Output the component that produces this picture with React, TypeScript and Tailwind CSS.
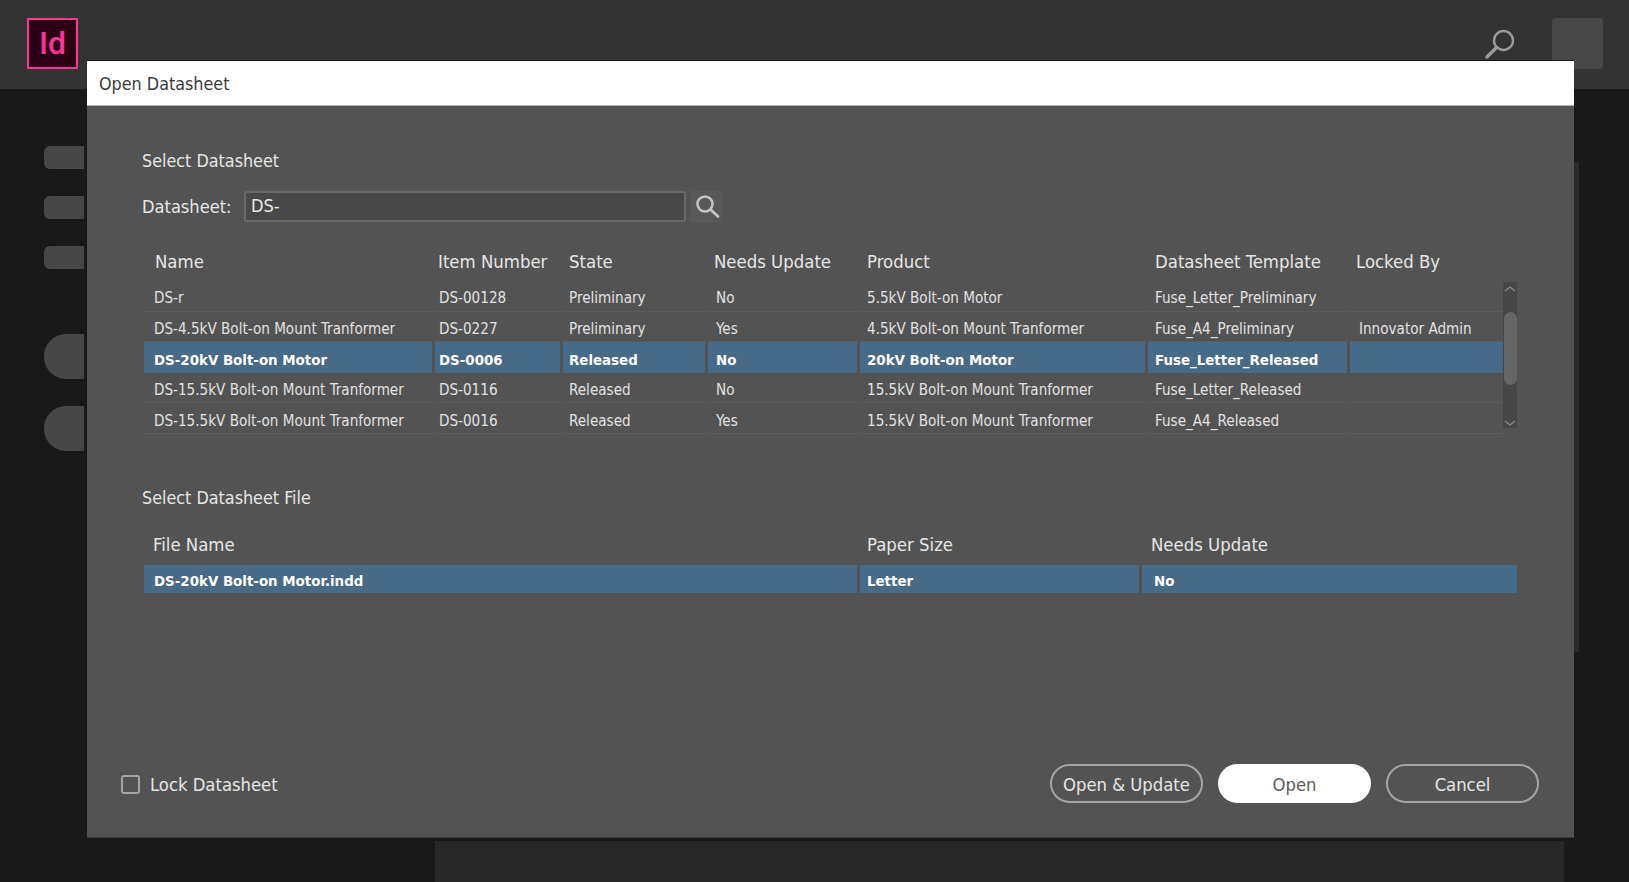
const font = "font-['DejaVu_Sans_Condensed','DejaVu_Sans',sans-serif]"

type Col = { label: string; w: string; hpl: string; pl: string }

const mainCols: Col[] = [
  { label: 'Name', w: 'w-[288px]', hpl: 'pl-[11px]', pl: 'pl-[10px]' },
  { label: 'Item Number', w: 'w-[125px]', hpl: 'pl-[3px]', pl: 'pl-[4px]' },
  { label: 'State', w: 'w-[142px]', hpl: 'pl-[6px]', pl: 'pl-[6px]' },
  { label: 'Needs Update', w: 'w-[149px]', hpl: 'pl-[6px]', pl: 'pl-[8px]' },
  { label: 'Product', w: 'w-[285px]', hpl: 'pl-[7px]', pl: 'pl-[7px]' },
  { label: 'Datasheet Template', w: 'w-[199px]', hpl: 'pl-[7px]', pl: 'pl-[7px]' },
  { label: 'Locked By', w: 'w-[153px]', hpl: 'pl-[6px]', pl: 'pl-[9px]' },
]

const rows = [
  ['DS-r', 'DS-00128', 'Preliminary', 'No', '5.5kV Bolt-on Motor', 'Fuse_Letter_Preliminary', ''],
  ['DS-4.5kV Bolt-on Mount Tranformer', 'DS-0227', 'Preliminary', 'Yes', '4.5kV Bolt-on Mount Tranformer', 'Fuse_A4_Preliminary', 'Innovator Admin'],
  ['DS-20kV Bolt-on Motor', 'DS-0006', 'Released', 'No', '20kV Bolt-on Motor', 'Fuse_Letter_Released', ''],
  ['DS-15.5kV Bolt-on Mount Tranformer', 'DS-0116', 'Released', 'No', '15.5kV Bolt-on Mount Tranformer', 'Fuse_Letter_Released', ''],
  ['DS-15.5kV Bolt-on Mount Tranformer', 'DS-0016', 'Released', 'Yes', '15.5kV Bolt-on Mount Tranformer', 'Fuse_A4_Released', ''],
]

const fileCols: Col[] = [
  { label: 'File Name', w: 'w-[713px]', hpl: 'pl-[9px]', pl: 'pl-[10px]' },
  { label: 'Paper Size', w: 'w-[279px]', hpl: 'pl-[7px]', pl: 'pl-[7px]' },
  { label: 'Needs Update', w: 'w-[375px]', hpl: 'pl-[9px]', pl: 'pl-[12px]' },
]

function Cell({ col, text, selected, tight }: { col: Col; text: string; selected: boolean; tight?: boolean }) {
  return (
    <div
      className={`${col.w} ${col.pl} ${tight ? 'pt-[4px]' : 'pt-[6px]'} mr-[3px] flex shrink-0 items-center whitespace-nowrap ${
        selected
          ? 'bg-[#476a87] text-[14.9px] font-bold text-white'
          : 'border-b border-b-[#5c5c5c] text-[15.1px] text-[#e2e2e2]'
      }`}
    >
      {text}
    </div>
  )
}

function HeaderRow({ cols }: { cols: Col[] }) {
  return (
    <div className="ml-[2px] flex h-[36px] items-center text-[18.4px]">
      {cols.map((c) => (
        <div key={c.label} className={`${c.w} ${c.hpl} mr-[3px] shrink-0 whitespace-nowrap`}>
          {c.label}
        </div>
      ))}
    </div>
  )
}

function Background() {
  return (
    <>
      <div className="flex h-[89px] items-center justify-between bg-[#333333] pb-[2px] pl-[27px] pr-[26px]">
        <div className="flex h-[51px] w-[51px] items-center justify-center border-2 border-[#ff3399] bg-[#2b0015] pb-[2px] font-['Roboto',sans-serif] text-[32px] font-medium text-[#ff3399]">
          Id
        </div>
        <div className="flex items-center gap-[37px]">
          <svg viewBox="0 0 30 30" className="h-[30px] w-[30px]" fill="none" stroke="#9a9a9a">
            <circle cx="18.5" cy="11.5" r="9.5" strokeWidth="2.4" />
            <path d="M11.5 18.5 2 28" strokeWidth="3.4" strokeLinecap="round" />
          </svg>
          <div className="h-[51px] w-[51px] rounded-[4px] bg-[#484848]" />
        </div>
      </div>
      <div className="flex flex-col gap-[27px] pl-[44px] pt-[57px]">
        <div className="h-[23px] w-[40px] rounded-l-[6px] bg-[#474747]" />
        <div className="h-[23px] w-[40px] rounded-l-[6px] bg-[#474747]" />
        <div className="h-[23px] w-[40px] rounded-l-[6px] bg-[#474747]" />
        <div className="mt-[38px] h-[45px] w-[40px] rounded-l-[22px] bg-[#474747]" />
        <div className="h-[45px] w-[40px] rounded-l-[22px] bg-[#474747]" />
      </div>
    </>
  )
}

function PillButton({ label, primary }: { label: string; primary?: boolean }) {
  return (
    <button
      className={`h-[39px] w-[153px] rounded-full pt-[3px] text-[18.3px] ${
        primary ? 'bg-white text-[#5c5c5c]' : 'border-2 border-[#a5a5a5] text-[#e6e6e6]'
      }`}
    >
      {label}
    </button>
  )
}

export default function App() {
  return (
    <div className={`relative h-screen w-full overflow-hidden bg-[#191919] ${font}`}>
      <Background />

      <div className="absolute bottom-0 left-[435px] h-[41px] w-[1129px] bg-[#272727]" />
      <div className="absolute left-[1574px] top-[162px] h-[490px] w-[5px] bg-[#2a2a2a]" />

      {/* dialog */}
      <div className="absolute left-[87px] top-[61px] flex h-[777px] w-[1487px] flex-col border-b border-b-[#3c3c3c] bg-[#535353] shadow-[0_-1px_0_#1a1a1a]">
        <div className="flex h-[45px] shrink-0 items-center border-b border-b-[#b5b5b5] bg-white pl-[12px] pt-[3px] text-[17.8px] text-[#3c3c3c]">
          Open Datasheet
        </div>

        {/* faint group frame */}
        <div className="pointer-events-none absolute left-[37px] top-[101px] h-[575px] w-[1413px] border border-[#565651]" />

        <div className="relative flex flex-col pl-[55px] text-[#e6e6e6]">
          <div className="mt-[42px] text-[17.8px] leading-[26px]">Select Datasheet</div>

          <div className="mt-[17px] flex h-[30px] items-center text-[18.1px]">
            <span className="w-[102px] pt-[2px]">Datasheet:</span>
            <div className="flex h-[31px] w-[442px] items-center rounded-[3px] border-2 border-[#696969] bg-[#484848] pl-[5px]">DS-</div>
            <button className="ml-[5px] flex h-[31px] w-[32px] items-center justify-center border border-[#5b5b55] bg-[#585858]">
              <svg viewBox="0 0 28 28" className="h-[28px] w-[28px]" fill="none" stroke="#c4c4c4">
                <circle cx="12" cy="12" r="7.5" strokeWidth="2.6" />
                <path d="M17.5 17.5 25 24.5" strokeWidth="2.8" strokeLinecap="round" />
              </svg>
            </button>
          </div>

          {/* datasheets */}
          <div className="mt-[23px] pb-[1px]">
            <HeaderRow cols={mainCols} />
          </div>
          <div className="relative ml-[2px]">
            {rows.map((row, i) => (
              <div key={i} className="flex h-[30.6px]">
                {row.map((text, j) => (
                  <Cell key={j} col={mainCols[j]} text={text} selected={i === 2} />
                ))}
              </div>
            ))}
            <div className="absolute left-[1359px] top-[1px] h-[146px] w-[14px] bg-[#474747]">
              <svg viewBox="0 0 14 146" className="absolute inset-0 h-full w-full" fill="none" stroke="#8a8a8a" strokeWidth="1.2">
                <path d="M2 9 7 5l5 4" />
                <path d="M2 139l5 4 5-4" />
              </svg>
              <div className="absolute left-[1px] top-[30px] h-[73px] w-[13px] rounded-full bg-[#666666]" />
            </div>
          </div>

          <div className="mt-[51px] text-[17.8px] leading-[26px]">Select Datasheet File</div>

          {/* files */}
          <div className="mt-[16px] pb-[2px]">
            <HeaderRow cols={fileCols} />
          </div>
          <div className="ml-[2px] flex h-[28px]">
            <Cell col={fileCols[0]} text="DS-20kV Bolt-on Motor.indd" selected tight />
            <Cell col={fileCols[1]} text="Letter" selected tight />
            <Cell col={fileCols[2]} text="No" selected tight />
          </div>
          <div className="ml-[2px] h-[120px] w-[1377px] border-b border-r border-[#565651]" />
        </div>

        <div className="mb-[34px] mt-auto flex h-[39px] items-center justify-between pl-[34px] pr-[35px] text-[#e6e6e6]">
          <label className="flex items-center gap-[10px] pt-[2px] text-[18.3px]">
            <span className="h-[19px] w-[19px] rounded-[3px] border-2 border-[#a5a5a5]" />
            Lock Datasheet
          </label>
          <div className="flex gap-[15px]">
            <PillButton label="Open &amp; Update" />
            <PillButton label="Open" primary />
            <PillButton label="Cancel" />
          </div>
        </div>
      </div>
    </div>
  )
}
